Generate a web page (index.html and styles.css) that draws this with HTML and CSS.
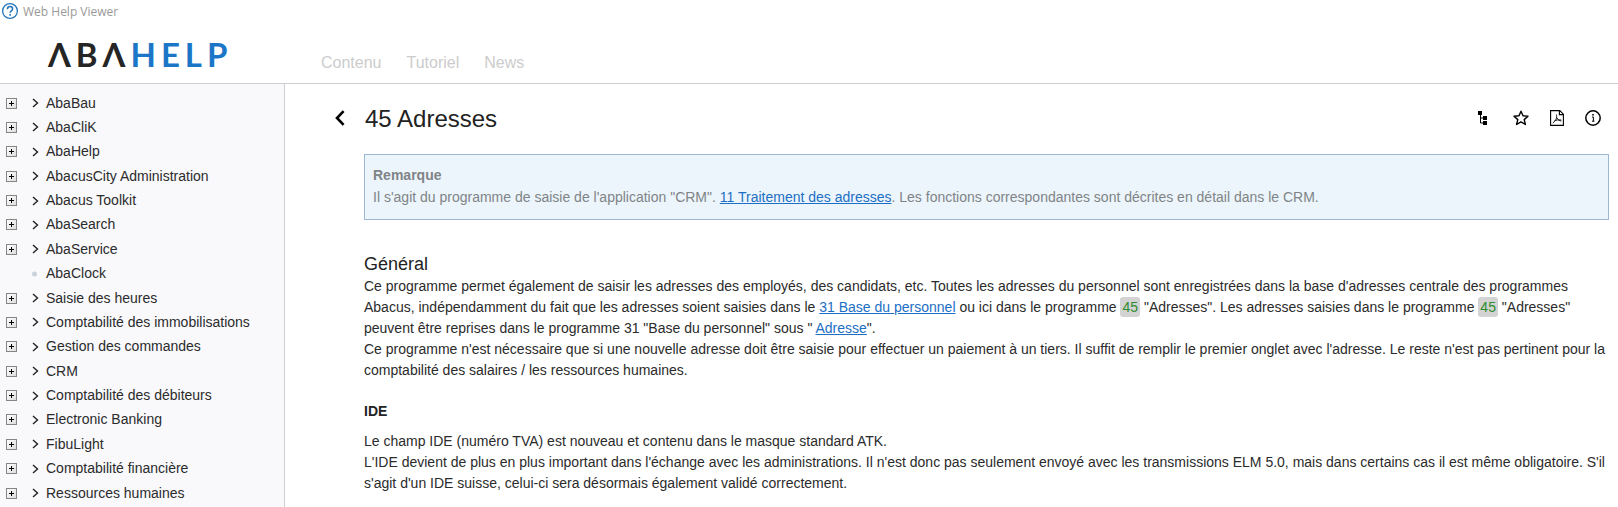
FILE: index.html
```html
<!DOCTYPE html>
<html lang="fr">
<head>
    <meta charset="UTF-8">
    <meta name="viewport" content="width=device-width, initial-scale=1.0">
    <title>Web Help Viewer</title>
    <link rel="stylesheet" href="styles.css">
</head>
<body>
    <div class="titlebar">
        <svg class="titlebar-icon" width="18" height="18" viewBox="0 0 18 18" fill="none" stroke="#2176bd">
            <circle cx="9" cy="9" r="7.4" stroke-width="1.3"/>
            <path d="M6.4 7.2C6.4 5.5 7.5 4.6 9 4.6s2.6.9 2.6 2.3c0 1.9-2.5 1.9-2.5 3.9" stroke-width="1.5"/>
            <path d="M9.1 12v1.7" stroke-width="1.6"/>
        </svg>
        <span>Web Help Viewer</span>
    </div>

    <header class="header">
        <div class="logo">ΛBΛ<span class="logo-help">HELP</span></div>
        <nav class="tabs">
            <a class="tab" href="#contenu">Contenu</a>
            <a class="tab" href="#tutoriel">Tutoriel</a>
            <a class="tab" href="#news">News</a>
        </nav>
    </header>

    <div class="main">
        <!-- Navigation tree, filled by the script below -->
        <nav class="sidebar">
            <ul class="tree" id="tree"></ul>
        </nav>

        <main class="content">
            <div class="page-head">
                <button type="button" class="icon-btn back" aria-label="Retour">
                    <svg width="14" height="16" viewBox="0 0 14 16" fill="none" stroke="#000" stroke-width="2.6"><path d="M10.6 1.2 4 8l6.6 6.8"/></svg>
                </button>
                <h1 class="page-title">45 Adresses</h1>
                <div class="actions">
                    <button type="button" class="icon-btn" aria-label="Structure">
                        <svg width="18" height="18" viewBox="0 0 18 18">
                            <path d="M2 2h4v4H2zM7 7h4v4H7zM7 12h4v4H7z"/>
                            <path d="M4.5 5v9H8M4.5 9H8" fill="none" stroke="#000"/>
                        </svg>
                    </button>
                    <button type="button" class="icon-btn" aria-label="Favoris">
                        <svg width="18" height="18" viewBox="0 0 18 18" fill="none" stroke="#000" stroke-width="1.4" stroke-linejoin="round"><path d="M9 2.2l2 4.6 5 .5-3.8 3.3 1.2 4.9L9 12.9l-4.4 2.6 1.2-4.9L2 7.3l5-.5z"/></svg>
                    </button>
                    <button type="button" class="icon-btn" aria-label="PDF">
                        <svg width="18" height="18" viewBox="0 0 18 18" fill="none" stroke="#000">
                            <path d="M2.6 1.6h9.2l3.6 3.6v11.2H2.6z" stroke-width="1.1"/>
                            <path d="M11.4 1.8v3.8h3.8" stroke-width="1.1"/>
                            <path d="M8.4 5.5c.7 3.2 0 5.4-3.6 8.6M8.8 8.6c.9 2.2 2.4 3.2 4.6 3.4M6.4 12c1.8-1.1 3.8-1.4 6.8-1" stroke-width=".9"/>
                        </svg>
                    </button>
                    <button type="button" class="icon-btn" aria-label="Informations">
                        <svg width="18" height="18" viewBox="0 0 18 18" fill="none" stroke="#000">
                            <circle cx="9" cy="9" r="7.2" stroke-width="1.5"/>
                            <path d="M8 8h1.4v4M8 12.2h2.4" stroke-width="1"/>
                            <path d="M9 5v1.6" stroke-width="1.6"/>
                        </svg>
                    </button>
                </div>
            </div>

            <div class="article">
                <div class="note">
                    <strong>Remarque</strong>
                    <p>Il s'agit du programme de saisie de l'application "CRM". <a href="#crm11">11 Traitement des adresses</a>. Les fonctions correspondantes sont décrites en détail dans le CRM.</p>
                </div>

                <h2>Général</h2>
                <p>Ce programme permet également de saisir les adresses des employés, des candidats, etc. Toutes les adresses du personnel sont enregistrées dans la base d'adresses centrale des programmes Abacus, indépendamment du fait que les adresses soient saisies dans le <a href="#p31">31 Base du personnel</a> ou ici dans le programme <mark>45</mark> "Adresses". Les adresses saisies dans le programme <mark>45</mark> "Adresses" peuvent être reprises dans le programme 31 "Base du personnel" sous " <a href="#adresse">Adresse</a>".</p>
                <p>Ce programme n'est nécessaire que si une nouvelle adresse doit être saisie pour effectuer un paiement à un tiers. Il suffit de remplir le premier onglet avec l'adresse. Le reste n'est pas pertinent pour la comptabilité des salaires / les ressources humaines.</p>

                <h3>IDE</h3>
                <p>Le champ IDE (numéro TVA) est nouveau et contenu dans le masque standard ATK.</p>
                <p>L'IDE devient de plus en plus important dans l'échange avec les administrations. Il n'est donc pas seulement envoyé avec les transmissions ELM 5.0, mais dans certains cas il est même obligatoire. S'il s'agit d'un IDE suisse, celui-ci sera désormais également validé correctement.</p>
            </div>
        </main>
    </div>

    <script>
        const entries = [
            "AbaBau", "AbaCliK", "AbaHelp", "AbacusCity Administration", "Abacus Toolkit",
            "AbaSearch", "AbaService", "AbaClock", "Saisie des heures",
            "Comptabilité des immobilisations", "Gestion des commandes", "CRM",
            "Comptabilité des débiteurs", "Electronic Banking", "FibuLight",
            "Comptabilité financière", "Ressources humaines"
        ];
        // Entries without children get a dot instead of the expand box
        const leaves = ["AbaClock"];

        document.getElementById("tree").innerHTML = entries.map(function (name) {
            const leaf = leaves.includes(name);
            const expand = leaf ? '<span></span>' : `<button type="button" class="expand" aria-label="Ouvrir ${name}"></button>`;
            const marker = leaf
                ? '<svg width="10" height="10" viewBox="0 0 10 10"><circle cx="2.5" cy="5" r="2.5" fill="#c9d3dc"/></svg>'
                : '<svg width="10" height="10" viewBox="0 0 10 10" fill="none" stroke="#222" stroke-width="1.4"><path d="M1 1 5.5 5 1 9"/></svg>';
            return `<li class="tree-item">${expand}${marker}<a href="#">${name}</a></li>`;
        }).join("");
    </script>
</body>
</html>
```
FILE: styles.css
```css
* {
    box-sizing: border-box;
}

body {
    margin: 0;
    height: 100vh;
    display: flex;
    flex-direction: column;
    background: #fff;
    color: #2b2b2b;
    font-family: "Liberation Sans", Arial, sans-serif;
    font-size: 14px;
    line-height: 21px;
}

.titlebar {
    display: flex;
    align-items: center;
    gap: 4px;
    height: 22px;
    padding-left: 1px;
    color: #999;
    font-family: "Open Sans", "Segoe UI", sans-serif;
    font-size: 12px;
}

.header {
    display: flex;
    align-items: flex-end;
    height: 62px;
    border-bottom: 1px solid #ccced3;
}

.logo {
    width: 321px;
    padding: 0 0 13px 48px;
    color: #252525;
    font-family: Lato, sans-serif;
    font-size: 33px;
    font-weight: 700;
    line-height: 32px;
    letter-spacing: 5px;
    white-space: nowrap;
}

.logo-help {
    color: #1c76c8;
}

.tabs {
    display: flex;
    gap: 25px;
    padding-bottom: 10px;
}

.tab {
    color: #ccc;
    font-size: 16px;
    text-decoration: none;
}

.main {
    display: flex;
    flex: 1;
    min-height: 0;
}

.sidebar {
    flex: 0 0 285px;
    padding: 7px 0 2px;
    background: #f9f9fc;
    border-right: 1px solid #ccced3;
}

.tree {
    display: flex;
    flex-direction: column;
    justify-content: space-between;
    height: 100%;
    margin: 0;
    padding: 0;
    list-style: none;
}

.tree-item {
    display: grid;
    grid-template-columns: 26px 14px 1fr;
    align-items: center;
    height: 24px;
    padding-left: 6px;
}

.tree-item a {
    color: #2b2b2b;
    text-decoration: none;
}

.expand {
    width: 11px;
    height: 11px;
    padding: 0;
    border: 1px solid #858585;
    background:
        linear-gradient(#000, #000) center / 5px 1px no-repeat,
        linear-gradient(#000, #000) center / 1px 5px no-repeat,
        linear-gradient(135deg, #fff, #ddd);
    cursor: pointer;
}

.content {
    flex: 1;
    padding: 19px 9px 0 48px;
    overflow: hidden;
}

.page-head {
    display: flex;
    align-items: center;
    height: 30px;
}

.page-title {
    margin: 0;
    color: #222;
    font-size: 24px;
    font-weight: 400;
}

.icon-btn {
    display: flex;
    padding: 0;
    border: none;
    background: none;
    cursor: pointer;
}

.back {
    width: 32px;
}

.actions {
    display: flex;
    gap: 18px;
    margin-left: auto;
    padding-right: 7px;
}

.article {
    padding: 21px 0 0 31px;
}

.article p {
    margin: 0;
}

.article a {
    color: #1c6fc4;
}

.article h2 {
    margin: 34px 0 1px;
    color: #222;
    font-size: 18px;
    font-weight: 400;
}

.article h3 {
    margin: 20px 0 9px;
    color: #222;
    font-size: 14px;
}

.article .note {
    padding: 10px 8px 11px;
    background: #ecf5fb;
    border: 1px solid #9db8d2;
    color: #808487;
}

.article .note p {
    margin-top: 1px;
}

mark {
    padding: 2px;
    border-radius: 3px;
    background: #d3d3d3;
    color: #2e8b2e;
}
```
